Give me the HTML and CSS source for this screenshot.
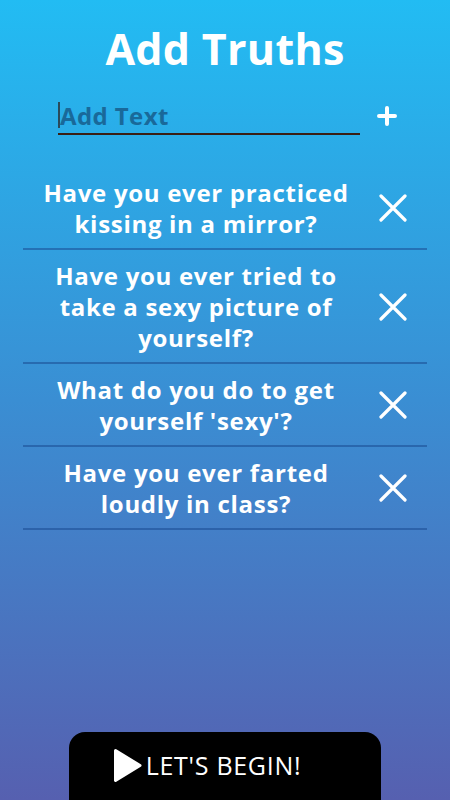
FILE: index.html
```html
<!DOCTYPE html>
<html>
<head>
<meta charset="utf-8">
<link rel="stylesheet" href="styles.css">
</head>
<body>
<div class="screen">
  <h1 class="title">Add Truths</h1>
  <div class="add-row">
    <div class="input"><span class="caret"></span><span class="placeholder">Add Text</span></div>
    <svg class="plus" width="20" height="20" viewBox="0 0 20 20"><path d="M10 2v16M2 10h16" stroke="#fff" stroke-width="4" stroke-linecap="round"/></svg>
  </div>
  <ul class="list">
    <li class="item"><span class="text">Have you ever practiced kissing in a mirror?</span><span class="del"><svg width="28" height="28" viewBox="0 0 28 28"><path d="M2 2l24 24M26 2L2 26" stroke="#fff" stroke-width="3.2" stroke-linecap="round"/></svg></span></li>
    <li class="item"><span class="text">Have you ever tried to take a sexy picture of yourself?</span><span class="del"><svg width="28" height="28" viewBox="0 0 28 28"><path d="M2 2l24 24M26 2L2 26" stroke="#fff" stroke-width="3.2" stroke-linecap="round"/></svg></span></li>
    <li class="item"><span class="text">What do you do to get yourself 'sexy'?</span><span class="del"><svg width="28" height="28" viewBox="0 0 28 28"><path d="M2 2l24 24M26 2L2 26" stroke="#fff" stroke-width="3.2" stroke-linecap="round"/></svg></span></li>
    <li class="item"><span class="text">Have you ever farted loudly in class?</span><span class="del"><svg width="28" height="28" viewBox="0 0 28 28"><path d="M2 2l24 24M26 2L2 26" stroke="#fff" stroke-width="3.2" stroke-linecap="round"/></svg></span></li>
  </ul>
  <button class="begin"><svg class="play" width="29" height="35" viewBox="0 0 29 35"><path d="M2.5 2.5L27 17.5 2.5 32.5z" fill="#fff" stroke="#fff" stroke-width="3" stroke-linejoin="round"/></svg><span>LET'S BEGIN!</span></button>
</div>
</body>
</html>
```
FILE: styles.css
```css
html, body {
  margin: 0;
  padding: 0;
}
body {
  width: 450px;
  height: 800px;
  overflow: hidden;
  font-family: "Open Sans", "DejaVu Sans", sans-serif;
}
.screen {
  height: 800px;
  display: flex;
  flex-direction: column;
  background: linear-gradient(180deg, #22bcf3 0%, #3a8ed3 50%, #5660b0 100%);
  color: #fff;
}
.title {
  margin: 23px 0 0;
  font-size: 43px;
  line-height: 52px;
  font-weight: 700;
  text-align: center;
  letter-spacing: 0.3px;
}
.add-row {
  display: flex;
  align-items: center;
  margin-top: 22px;
  padding-left: 58px;
}
.input {
  width: 302px;
  height: 36px;
  border-bottom: 2px solid #3a1e14;
  display: flex;
  align-items: center;
}
.caret {
  width: 2px;
  height: 26px;
  background: #2a4a5a;
}
.placeholder {
  font-size: 24px;
  font-weight: 700;
  color: #19699a;
  letter-spacing: 0.4px;
}
.plus {
  margin-left: 17px;
}
.list {
  list-style: none;
  margin: 32px 23px 0;
  padding: 0;
}
.item {
  display: flex;
  align-items: center;
  padding: 10px 0 9px;
  border-bottom: 2px solid rgba(25, 75, 145, 0.55);
}
.text {
  flex: 1;
  text-align: center;
  font-size: 24px;
  font-weight: 700;
  line-height: 31px;
  padding-left: 11px;
  letter-spacing: 0.7px;
}
.del {
  width: 69px;
  display: flex;
  justify-content: center;
}
.begin {
  margin: auto auto 0;
  width: 312px;
  height: 84px;
  transform: translateY(16px);
  background: #000;
  border: none;
  border-radius: 16px;
  color: #fff;
  display: flex;
  align-items: flex-start;
  justify-content: center;
  padding: 16px 32px 0 0;
  gap: 4px;
  font-family: "Open Sans", "DejaVu Sans", sans-serif;
  font-size: 25px;
  font-weight: 500;
  letter-spacing: 0.7px;
}
.begin span {
  line-height: 35px;
}
.play {
  margin-left: -4px;
}
```
